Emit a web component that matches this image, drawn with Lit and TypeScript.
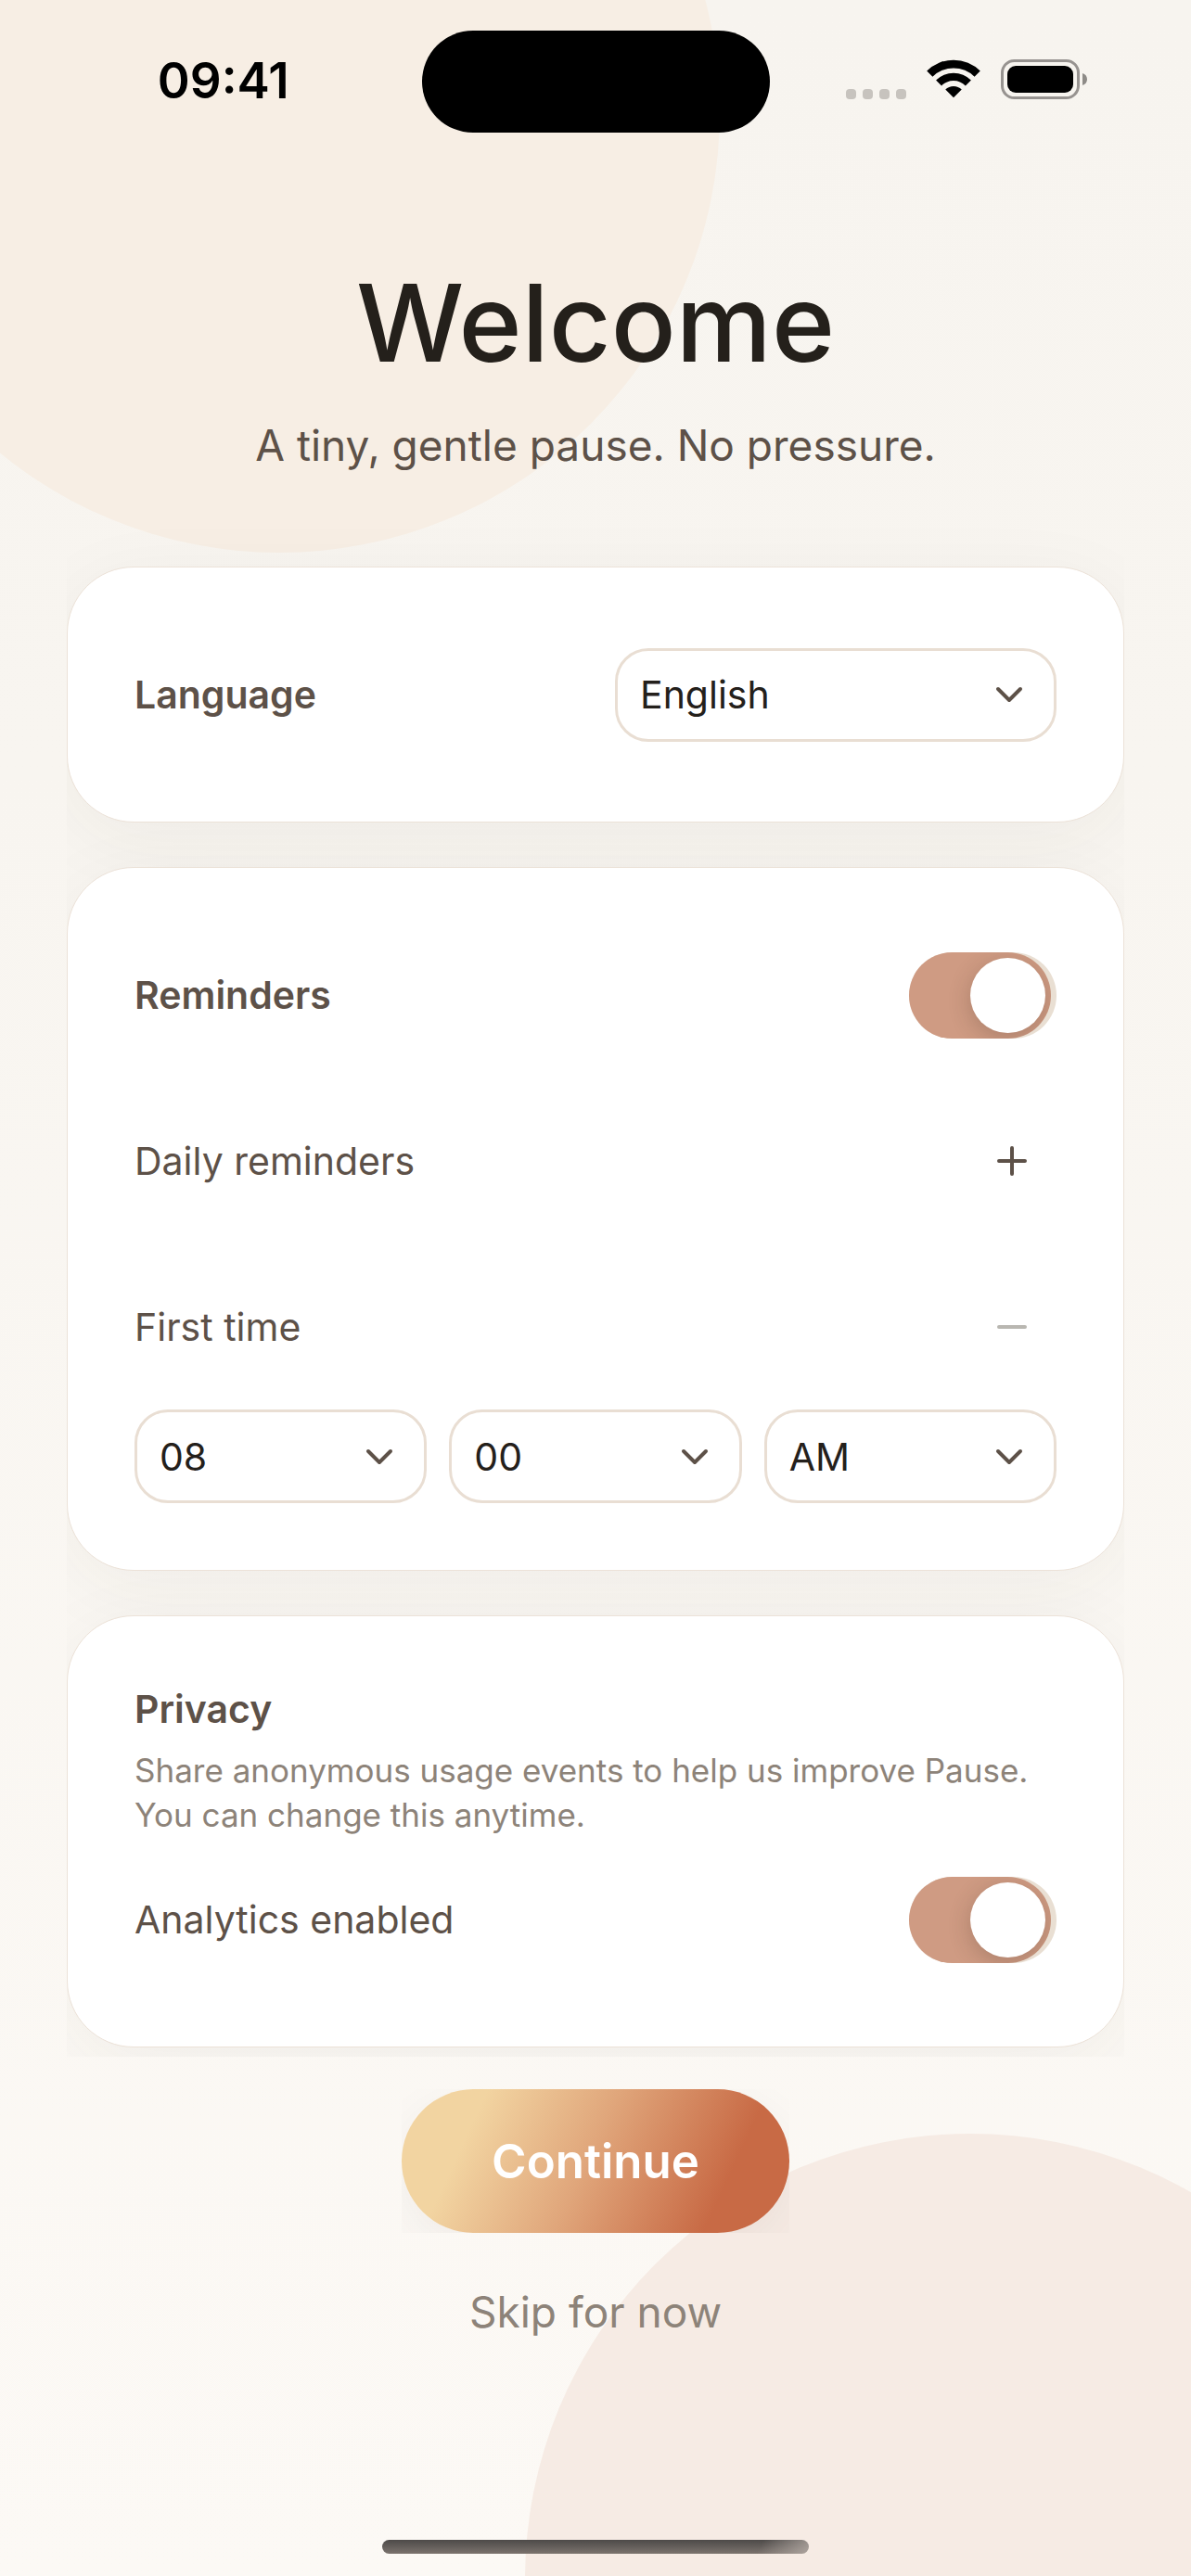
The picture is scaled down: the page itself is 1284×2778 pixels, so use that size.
import { LitElement, html, css, svg } from "lit";
import { customElement, property, state } from "lit/decorators.js";

/** On/off switch with a label supplied by the parent row. */
@customElement("pause-toggle")
class PauseToggle extends LitElement {
  @property() label = "";
  @property({ type: Boolean }) checked = false;

  static styles = css`
    :host {
      display: block;
    }
    .track {
      position: relative;
      display: flex;
      width: 159px;
      height: 93px;
      border-radius: 47px;
      background: #e9dfd3;
    }
    .fill {
      display: flex;
      align-items: center;
      box-sizing: border-box;
      width: 93px;
      padding: 6px;
      border-radius: 47px;
      overflow: hidden;
    }
    .input:checked + .fill {
      width: 153px;
      justify-content: flex-end;
      background: #cf9b83;
    }
    .knob {
      width: 81px;
      height: 81px;
      border-radius: 50%;
      background: #fff;
      box-shadow: 0 6px 24px rgba(60, 40, 30, 0.24);
    }
    .input {
      position: absolute;
      inset: 0;
      width: 100%;
      height: 100%;
      margin: 0;
      opacity: 0;
      cursor: pointer;
    }
  `;

  render() {
    return html`
      <span class="track">
        <input
          class="input"
          type="checkbox"
          aria-label=${this.label}
          .checked=${this.checked}
        />
        <span class="fill"><span class="knob"></span></span>
      </span>
    `;
  }
}

/** Bordered drop-down with a chevron. */
@customElement("pause-select")
class PauseSelect extends LitElement {
  @property() label = "";
  @property({ type: Array }) options: string[] = [];

  static styles = css`
    :host {
      display: block;
      min-width: 0;
    }
    .box {
      display: grid;
      align-items: center;
    }
    .select,
    .chevron {
      grid-area: 1 / 1;
    }
    .select {
      appearance: none;
      box-sizing: border-box;
      width: 100%;
      height: 101px;
      padding: 0 84px 0 24px;
      border: 3px solid #e9ded3;
      border-radius: 36px;
      background: #fff;
      color: #24201b;
      font: 400 41px/52px Inter, "Liberation Sans", sans-serif;
    }
    .chevron {
      justify-self: end;
      width: 30px;
      height: 18px;
      margin-right: 36px;
      pointer-events: none;
    }
  `;

  render() {
    return html`
      <div class="box">
        <select class="select" aria-label=${this.label}>
          ${this.options.map((o) => html`<option>${o}</option>`)}
        </select>
        <svg class="chevron" viewBox="0 0 30 18" fill="none" stroke="#5d5148"
          stroke-width="4" stroke-linecap="round" stroke-linejoin="round">
          <path d="M3 3 L15 15 L27 3" />
        </svg>
      </div>
    `;
  }
}

const wifiIcon = svg`
  <path d="M0.6 36.6 A125 125 0 0 1 177.4 36.6 L158.3 55.7 A98 98 0 0 0 19.7 55.7 Z" />
  <path d="M31 67 A82 82 0 0 1 147 67 L128.6 85.4 A56 56 0 0 0 49.4 85.4 Z" />
  <path d="M62.1 98.1 A38 38 0 0 1 115.9 98.1 L89 125 Z" />
`;

const batteryIcon = svg`
  <rect x="1.5" y="1.5" width="82" height="40" rx="13" fill="none" stroke="#979390" stroke-width="3" />
  <rect x="7" y="7" width="71" height="29" rx="9" fill="#000" />
  <path d="M88 15 C91 16 93 18 93 21.5 C93 25 91 27 88 28 Z" fill="#8e8b87" />
`;

@customElement("app-root")
class AppRoot extends LitElement {
  @state() private hours = ["08", "09", "10", "11", "12"];
  @state() private minutes = ["00", "15", "30", "45"];

  static styles = css`
    :host {
      display: block;
      font-family: Inter, "Liberation Sans", sans-serif;
      color: #5d5148;
    }
    .screen {
      position: relative;
      z-index: 0;
      display: flex;
      flex-direction: column;
      box-sizing: border-box;
      min-height: 100vh;
      padding: 33px 0 24px;
      overflow: hidden;
      background: linear-gradient(180deg, #f7f4ef 0%, #f8f5f0 30%, #fcf9f5 100%);
    }
    .blob {
      position: absolute;
      z-index: -1;
      border-radius: 50%;
    }
    .blob-top {
      left: -174px;
      top: -354px;
      width: 950px;
      height: 950px;
      background: #f7eee4;
    }
    .blob-bottom {
      right: -242px;
      bottom: -483px;
      width: 960px;
      height: 960px;
      background: #f6ebe4;
    }
    .status {
      display: grid;
      grid-template-columns: 1fr 375px 1fr;
      height: 110px;
    }
    .time {
      display: flex;
      justify-content: center;
      padding: 22px 0 0 27px;
      color: #000;
      font-size: 53px;
      font-weight: 600;
      line-height: 64px;
    }
    .island {
      border-radius: 55px;
      background: #000;
    }
    .indicators {
      display: flex;
      align-items: flex-end;
      justify-content: flex-end;
      height: 74px;
      padding-right: 111px;
    }
    .dots {
      display: flex;
      gap: 7px;
      margin: 0 22px 0 0;
    }
    .dot {
      width: 11px;
      height: 11px;
      border-radius: 4px;
      background: #c7c3be;
    }
    .wifi {
      width: 58px;
      height: 42px;
      margin: 0 22px 1px 0;
    }
    .battery {
      width: 94px;
      height: 43px;
    }
    .content {
      margin: 0 72px;
      padding: 133px 0 10px;
      overflow: hidden;
    }
    .header {
      text-align: center;
    }
    .title {
      margin: 0 0 30px;
      color: #24201b;
      font-size: 116px;
      font-weight: 500;
      line-height: 144px;
    }
    .subtitle {
      margin: 0;
      font-size: 46px;
      line-height: 60px;
    }
    .cards {
      display: flex;
      flex-direction: column;
      gap: 48px;
      padding-top: 101px;
    }
    .card {
      padding: 72px;
      border: 1px solid #ece2d8;
      border-radius: 72px;
      background: #fff;
      box-shadow: 0 18px 84px rgba(60, 50, 45, 0.05);
    }
    .row {
      display: flex;
      align-items: center;
      justify-content: space-between;
      min-height: 130px;
      font-size: 41px;
      line-height: 56px;
    }
    .rows {
      display: flex;
      flex-direction: column;
      gap: 49px;
    }
    .strong {
      margin: 0;
      font-size: 41px;
      font-weight: 600;
      line-height: 56px;
    }
    .language {
      flex: 0 0 476px;
    }
    .times {
      display: grid;
      grid-template-columns: repeat(3, 1fr);
      gap: 24px;
      margin-top: 24px;
    }
    .icon-button {
      display: flex;
      align-items: center;
      justify-content: center;
      width: 96px;
      height: 96px;
      padding: 0;
      border: 0;
      background: none;
      color: #5d5148;
    }
    .icon-button:disabled {
      color: #b9b7b1;
    }
    .glyph {
      width: 32px;
      height: 32px;
    }
    .note {
      margin: 14px 0 24px;
      color: #8d8379;
      font-size: 35px;
      line-height: 48px;
    }
    .actions {
      display: flex;
      flex-direction: column;
      align-items: center;
      gap: 55px;
      padding-top: 35px;
    }
    .primary-clip {
      overflow: hidden;
    }
    .primary {
      display: block;
      padding: 45px 97px;
      border: 0;
      border-radius: 78px;
      background: linear-gradient(115deg, #f2d4a1 19%, #e0a67b 48%, #c86a45 81%);
      box-shadow: 0 18px 54px rgba(60, 55, 50, 0.06);
      color: #fff;
      font: 600 51px/65px Inter, "Liberation Sans", sans-serif;
    }
    .skip {
      padding: 0;
      border: 0;
      background: none;
      color: #8d8379;
      font: 400 46px/60px Inter, "Liberation Sans", sans-serif;
    }
    .home {
      align-self: center;
      width: 460px;
      height: 15px;
      margin-top: auto;
      border-radius: 8px;
      background:
        linear-gradient(115deg, transparent 88%, rgba(190, 180, 174, 0.75) 100%),
        linear-gradient(180deg, #4d4a48, #7b736e);
    }
  `;

  render() {
    return html`
      <div class="screen">
        <div class="blob blob-top"></div>
        <div class="blob blob-bottom"></div>

        <div class="status">
          <div class="time">09:41</div>
          <div class="island"></div>
          <div class="indicators">
            <div class="dots">
              ${[0, 1, 2, 3].map(() => html`<span class="dot"></span>`)}
            </div>
            <svg class="wifi" viewBox="0 0 178 125">${wifiIcon}</svg>
            <svg class="battery" viewBox="0 0 94 43">${batteryIcon}</svg>
          </div>
        </div>

        <main class="content">
          <header class="header">
            <h1 class="title">Welcome</h1>
            <p class="subtitle">A tiny, gentle pause. No pressure.</p>
          </header>

          <div class="cards">
            <section class="card">
              <div class="row">
                <h2 class="strong">Language</h2>
                <pause-select
                  class="language"
                  label="Language"
                  .options=${["English"]}
                ></pause-select>
              </div>
            </section>

            <section class="card">
              <div class="rows">
                <div class="row">
                  <h2 class="strong">Reminders</h2>
                  <pause-toggle label="Reminders" checked></pause-toggle>
                </div>
                <div class="row">
                  <span>Daily reminders</span>
                  <button class="icon-button" aria-label="Add reminder">
                    <svg class="glyph" viewBox="0 0 32 32" stroke="currentColor"
                      stroke-width="4" stroke-linecap="round">
                      <path d="M2 16 H30 M16 2 V30" />
                    </svg>
                  </button>
                </div>
                <div class="row">
                  <span>First time</span>
                  <button class="icon-button" aria-label="Remove reminder" disabled>
                    <svg class="glyph" viewBox="0 0 32 32" stroke="currentColor"
                      stroke-width="4" stroke-linecap="round">
                      <path d="M2 16 H30" />
                    </svg>
                  </button>
                </div>
              </div>
              <div class="times">
                <pause-select label="Hour" .options=${this.hours}></pause-select>
                <pause-select label="Minute" .options=${this.minutes}></pause-select>
                <pause-select label="AM or PM" .options=${["AM", "PM"]}></pause-select>
              </div>
            </section>

            <section class="card">
              <h2 class="strong">Privacy</h2>
              <p class="note">
                Share anonymous usage events to help us improve Pause. You can
                change this anytime.
              </p>
              <div class="row">
                <span>Analytics enabled</span>
                <pause-toggle label="Analytics enabled" checked></pause-toggle>
              </div>
            </section>
          </div>
        </main>

        <div class="actions">
          <div class="primary-clip">
            <button class="primary">Continue</button>
          </div>
          <button class="skip">Skip for now</button>
        </div>

        <div class="home"></div>
      </div>
    `;
  }
}
